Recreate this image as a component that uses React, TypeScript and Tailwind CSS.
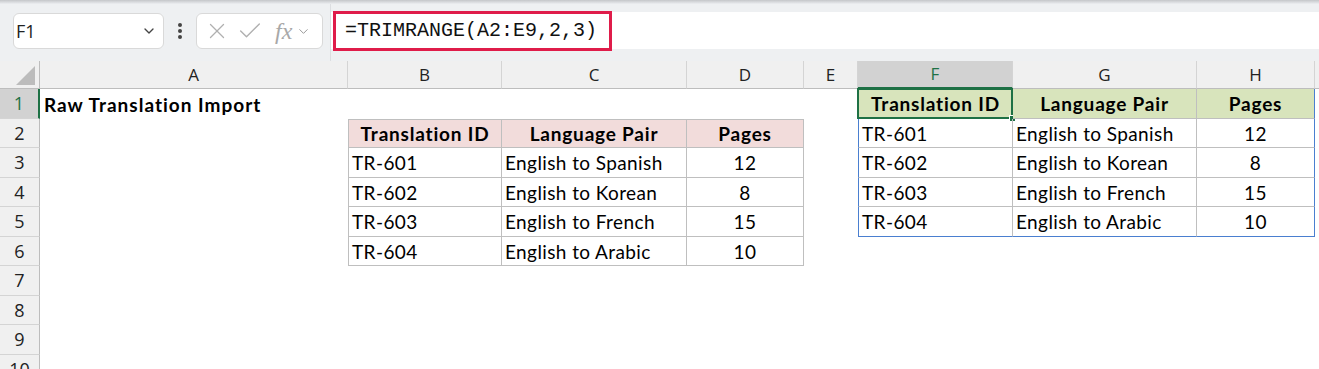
import { ChevronDown, X, Check } from "lucide-react";

const cols = [
  { key: "A", w: 308 },
  { key: "B", w: 154 },
  { key: "C", w: 185 },
  { key: "D", w: 117 },
  { key: "E", w: 54 },
  { key: "F", w: 155 },
  { key: "G", w: 184 },
  { key: "H", w: 118 },
  { key: "I", w: 200 },
];

const rowHeights = [30, 29, 30, 29, 30, 29, 30, 29, 30, 29];

const records = [
  ["TR-601", "English to Spanish", "12"],
  ["TR-602", "English to Korean", "8"],
  ["TR-603", "English to French", "15"],
  ["TR-604", "English to Arabic", "10"],
];

const headers = ["Translation ID", "Language Pair", "Pages"];

const cellFont = { fontFamily: "Lato, 'Noto Sans', sans-serif" };
const uiFont = { fontFamily: "'Open Sans', 'Noto Sans', sans-serif" };

function Cell({ row, col, w }: { row: number; col: string; w: number }) {
  const base = "shrink-0 flex items-center pt-[2px] text-[19px] text-black overflow-visible whitespace-nowrap";

  // Raw title
  if (row === 1 && col === "A") {
    return (
      <div className={base + " px-[4px] font-bold tracking-[1px]"} style={{ width: w }}>
        Raw Translation Import
      </div>
    );
  }

  // Left table: B..D rows 2..6
  const leftIdx = ["B", "C", "D"].indexOf(col);
  if (leftIdx >= 0 && row >= 2 && row <= 6) {
    const r = row - 2;
    const isHead = r === 0;
    const text = isHead ? headers[leftIdx] : records[r - 1][leftIdx];
    return (
      <div
        className={
          base +
          " px-[3px] border-r border-b border-[#bfbfbf]" +
          (leftIdx === 0 ? " border-l" : "") +
          (isHead ? " border-t bg-[#f2dcdb] font-bold tracking-[0.8px] justify-center" : " tracking-[0.4px]") +
          (!isHead && leftIdx === 2 ? " justify-center" : "")
        }
        style={{ width: w }}
      >
        {text}
      </div>
    );
  }

  // Spilled table: F..H rows 1..5
  const rightIdx = ["F", "G", "H"].indexOf(col);
  if (rightIdx >= 0 && row >= 1 && row <= 5) {
    const r = row - 1;
    const isHead = r === 0;
    const text = isHead ? headers[rightIdx] : records[r - 1][rightIdx];
    return (
      <div
        className={
          base +
          " relative px-[3px] border-b" +
          (r === 4 ? " border-b-[#4a7fd0]" : " border-b-[#bfbfbf]") +
          (rightIdx === 0 ? " border-l border-l-[#4a7fd0]" : "") +
          (rightIdx === 2 ? " border-r border-r-[#4a7fd0]" : " border-r border-r-[#bfbfbf]") +
          (isHead ? " bg-[#d8e4bc] font-bold tracking-[0.8px] justify-center" : " tracking-[0.4px]") +
          (!isHead && rightIdx === 2 ? " justify-center" : "")
        }
        style={{ width: w }}
      >
        {text}
        {isHead && rightIdx === 0 && (
          <>
            <div className="absolute -left-[2px] -top-[1px] -right-[1px] -bottom-[1px] border-2 border-[#1e7145]" />
            <div className="absolute -right-[4px] -bottom-[4px] w-[7px] h-[7px] bg-[#1e7145] border border-white" />
          </>
        )}
      </div>
    );
  }

  return <div className="shrink-0" style={{ width: w }} />;
}

export default function App() {
  return (
    <div className="w-[1319px] h-[369px] overflow-hidden bg-white" style={uiFont}>
      {/* top shadow */}
      <div className="h-[4px] bg-gradient-to-b from-[#c4c6c9] to-[#eceef1]" />

      {/* formula bar */}
      <div className="h-[57px] bg-[#eef0f2] flex items-start">
        <div className="ml-[13px] mt-[9px] w-[151px] h-[36px] bg-white border border-[#d9d9d9] rounded-[6px] flex items-center justify-between pl-[2px] pr-[6px]">
          <span className="text-[18px] text-[#222]">F1</span>
          <ChevronDown className="w-[16px] h-[16px] text-[#444]" strokeWidth={2} />
        </div>
        <div className="w-[32px] mt-[9px] h-[36px] flex flex-col items-center justify-center gap-[2px]">
          <span className="w-[4px] h-[4px] rounded-full bg-[#444]" />
          <span className="w-[4px] h-[4px] rounded-full bg-[#444]" />
          <span className="w-[4px] h-[4px] rounded-full bg-[#444]" />
        </div>
        <div className="mt-[9px] w-[127px] h-[36px] bg-white border border-[#d9d9d9] rounded-[6px] flex items-center pl-[7px]">
          <X className="w-[26px] h-[26px] text-[#b0b0b0]" strokeWidth={1.2} />
          <Check className="w-[28px] h-[28px] text-[#b0b0b0] ml-[6px]" strokeWidth={1.2} />
          <span
            className="ml-[11px] text-[24px] italic text-[#a8a8a8] leading-none"
            style={{ fontFamily: "'Liberation Serif', serif" }}
          >
            fx
          </span>
          <ChevronDown className="w-[15px] h-[15px] text-[#9a9a9a] ml-[4px]" strokeWidth={1.6} />
        </div>
        <div className="ml-[7px] w-px h-[57px] bg-[#dcdee1]" />
        <div className="flex-1 mt-[8px] h-[37px] bg-white flex items-center">
          <div
            className="ml-[2px] w-[279px] h-[40px] border-[3px] border-[#df1c4a] flex items-center pl-[9px] text-[20px] text-[#111]"
            style={{ fontFamily: "'Liberation Mono', monospace" }}
          >
            =TRIMRANGE(A2:E9,2,3)
          </div>
        </div>
      </div>

      {/* column headers */}
      <div className="flex h-[28px] bg-[#f0f0f0]">
        <div className="w-[40px] shrink-0 relative border-r border-b border-[#bdbdbd]">
          <svg className="absolute right-[4px] bottom-[3px]" width="19" height="19" viewBox="0 0 19 19">
            <polygon points="19,0 19,19 0,19" fill="#bcbcbc" />
          </svg>
        </div>
        {cols.map((c) => (
          <div
            key={c.key}
            className={
              "shrink-0 flex items-center justify-center text-[17px] border-r border-[#d4d4d4] " +
              (c.key === "F"
                ? "bg-[#d2d2d2] text-[#1e7145] border-b-2 border-b-[#1e7145]"
                : "text-[#222] border-b border-b-[#bdbdbd]")
            }
            style={{ width: c.w }}
          >
            {c.key === "I" ? "" : c.key}
          </div>
        ))}
      </div>

      {/* rows */}
      <div style={cellFont}>
        {rowHeights.map((h, i) => {
          const row = i + 1;
          return (
            <div key={row} className="flex" style={{ height: h }}>
              <div
                className={
                  "w-[40px] shrink-0 flex items-center justify-center text-[18px] border-b border-b-[#d4d4d4] " +
                  (row === 1
                    ? "bg-[#d2d2d2] text-[#1e7145] border-r-2 border-r-[#1e7145]"
                    : "bg-[#f0f0f0] text-[#222] border-r border-r-[#bdbdbd]")
                }
                style={uiFont}
              >
                {row}
              </div>
              {cols.map((c) => (
                <Cell key={c.key} row={row} col={c.key} w={c.w} />
              ))}
            </div>
          );
        })}
      </div>
    </div>
  );
}
